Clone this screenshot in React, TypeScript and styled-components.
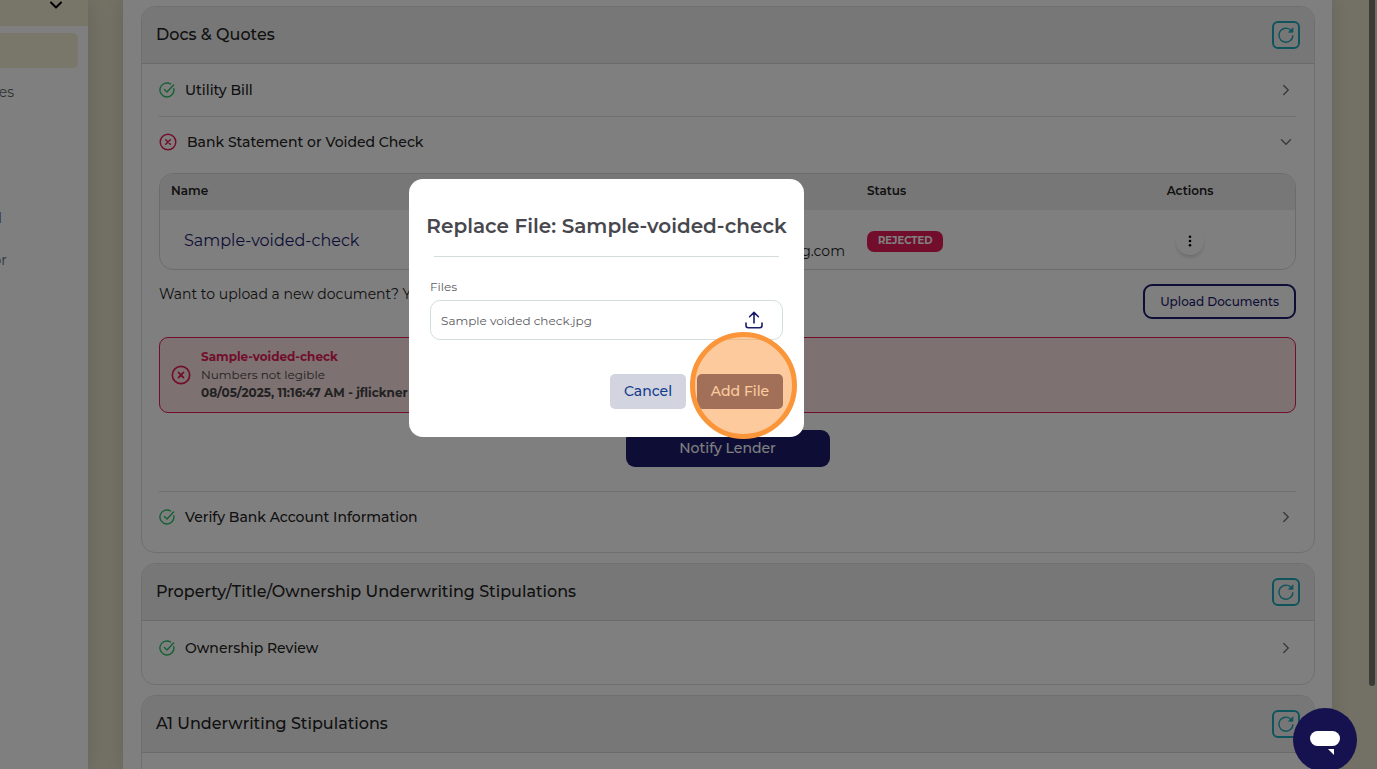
import React from "react";
import styled, { createGlobalStyle } from "styled-components";
import { ChevronDown, ChevronRight } from "lucide-react";

const navy = "#1b1b6b";
const red = "#e41c58";
const teal = "#1fa9b8";

const GlobalStyle = createGlobalStyle`
  *, *::before, *::after { box-sizing: border-box; }
  html, body { margin: 0; height: 100%; overflow: hidden; }
  body, button, input {
    font-family: Montserrat, Inter, "Liberation Sans", sans-serif;
  }
  body { font-size: 14px; line-height: 20px; color: #222222; }
  h2, p { margin: 0; }
  button { cursor: pointer; }
`;

const Page = styled.div`
  display: flex;
  height: 100vh;
  overflow: hidden;
  background: #e7e3ca;
`;

const Sidebar = styled.nav`
  flex: 0 0 88px;
  background: #ffffff;
  box-shadow: 0 0 20px rgba(0, 0, 0, 0.12);
`;

const SidebarTop = styled.button`
  display: flex;
  align-items: flex-start;
  justify-content: flex-end;
  width: 100%;
  height: 26px;
  padding: 0 24px 0 0;
  border: 0;
  background: #f0ecd2;
  color: #000000;
`;

const NavItem = styled.a<{ $active?: boolean; $width?: number }>`
  display: flex;
  justify-content: flex-end;
  align-items: center;
  height: 35px;
  margin: 0 0 7px;
  padding-bottom: 1px;
  width: ${(p) => p.$width ?? 78}px;
  overflow: hidden;
  border-radius: 0 5px 5px 0;
  background: ${(p) => (p.$active ? "#f3efd4" : "transparent")};
  color: #666666;
  text-decoration: none;
`;

const NavList = styled.div`
  padding-top: 7px;
`;

const Main = styled.main`
  flex: 1;
  min-width: 0;
  display: flex;
  flex-direction: column;
  gap: 10px;
  margin: 0 45px 0 35px;
  padding: 6px 17px 0 18px;
  background: #ffffff;
  box-shadow: 0 0 20px rgba(0, 0, 0, 0.12);
`;

const Card = styled.section`
  flex: none;
  border: 1px solid #dfdfdf;
  border-radius: 14px;
  overflow: hidden;
`;

const CardHeader = styled.header`
  display: flex;
  align-items: center;
  justify-content: space-between;
  height: 57px;
  padding: 0 14px;
  background: #eeeeee;
  border-bottom: 1px solid #d4d4d4;
`;

const CardTitle = styled.h2`
  font-size: 16px;
  line-height: 24px;
  font-weight: 500;
`;

const RefreshButton = styled.button`
  display: grid;
  place-items: center;
  width: 28px;
  height: 28px;
  padding: 0;
  border: 2px solid ${teal};
  border-radius: 6px;
  background: transparent;
`;

const CardBody = styled.div`
  padding: 0 18px 10px 17px;
`;

const Row = styled.button<{ $first?: boolean; $line?: boolean }>`
  display: flex;
  align-items: center;
  gap: 10px;
  width: 100%;
  height: ${(p) => (p.$first ? 53 : 50)}px;
  padding: 0 1px 0 0;
  border: 0;
  border-bottom: ${(p) => (p.$line ? "1px solid #e0e0e0" : "0")};
  background: transparent;
  color: #222222;
  font-size: 14px;
  line-height: 20px;
  font-weight: 500;
  text-align: left;

  svg:last-child { margin-left: auto; }
`;

const TableFrame = styled.div`
  margin-top: 6px;
  border: 1px solid #d9d9d9;
  border-radius: 14px;
  overflow: hidden;
`;

const Table = styled.table`
  width: 100%;
  table-layout: fixed;
  border-collapse: collapse;
`;

const HeadCell = styled.th<{ $width?: string; $center?: boolean }>`
  width: ${(p) => p.$width ?? "auto"};
  height: 36px;
  padding: 0 11px 2px;
  background: #eeeeee;
  font-size: 12px;
  font-weight: 600;
  text-align: ${(p) => (p.$center ? "center" : "left")};
`;

const Cell = styled.td<{ $align?: string }>`
  height: 59px;
  padding: 2px 11px 0;
  text-align: ${(p) => p.$align ?? "left"};
`;

const FileLink = styled.a`
  padding-left: 13px;
  color: ${navy};
  font-size: 16px;
  text-decoration: none;
`;

const Email = styled.span`
  display: block;
  padding-top: 20px;
`;

const Badge = styled.span`
  display: inline-block;
  padding: 0 11px 1px;
  border-radius: 7px;
  background: ${red};
  color: #ffffff;
  font-size: 10px;
  line-height: 20px;
  font-weight: 700;
`;

const MoreButton = styled.button`
  display: inline-grid;
  place-items: center;
  width: 28px;
  height: 28px;
  padding: 0;
  border: 0;
  border-radius: 50%;
  background: #ffffff;
  color: #000000;
  vertical-align: middle;
  box-shadow: 0 3px 4px -1px rgba(0, 0, 0, 0.18);
`;

const UploadRow = styled.div`
  display: flex;
  justify-content: space-between;
  margin-top: 14px;
`;

const OutlineButton = styled.button`
  height: 35px;
  padding: 0 15px;
  border: 2px solid ${navy};
  border-radius: 9px;
  background: transparent;
  color: ${navy};
  font-size: 12px;
  font-weight: 500;
`;

const Alert = styled.div`
  display: flex;
  align-items: center;
  gap: 10px;
  height: 76px;
  margin-top: 18px;
  padding: 0 11px;
  border: 1px solid ${red};
  border-radius: 9px;
  background: #fbe2e2;
  font-size: 12px;
  line-height: 18px;
  color: #444444;
`;

const AlertTitle = styled.strong`
  display: block;
  font-weight: 700;
  color: ${red};
`;

const AlertMeta = styled.strong`
  display: block;
  font-weight: 700;
`;

const NotifyRow = styled.div`
  display: flex;
  justify-content: center;
  padding: 17px 0 24px;
  border-bottom: 1px solid #e0e0e0;
`;

const NotifyButton = styled.button`
  width: 204px;
  height: 37px;
  padding: 0 0 2px;
  border: 0;
  border-radius: 9px;
  background: ${navy};
  color: #ffffff;
  font-size: 14px;
  font-weight: 500;
`;

const ScrollThumb = styled.div`
  position: fixed;
  top: -6px;
  right: 2px;
  width: 6px;
  height: 90vh;
  border-radius: 3px;
  background: #77766b;
`;

const Overlay = styled.div`
  position: fixed;
  inset: 0;
  display: flex;
  align-items: center;
  justify-content: center;
  padding: 0 164px 153px 0;
  background: rgba(0, 0, 0, 0.5);
`;

const Dialog = styled.form`
  width: 395px;
  padding: 32px 21px 28px;
  border-radius: 14px;
  background: #ffffff;
`;

const DialogTitle = styled.h2`
  margin: 0 -20px;
  color: #47474d;
  font-size: 20px;
  line-height: 30px;
  font-weight: 600;
  text-align: center;
  white-space: nowrap;
`;

const Rule = styled.hr`
  height: 1px;
  margin: 15px 4px 20px;
  border: 0;
  background: #d5dcdc;
`;

const Label = styled.label`
  display: block;
  color: #5a5a60;
  font-size: 12px;
  line-height: 20px;
`;

const FileField = styled.div`
  display: flex;
  align-items: center;
  height: 40px;
  margin-top: 3px;
  padding: 0 19px 0 10px;
  border: 1px solid #d3dede;
  border-radius: 10px;
`;

const FileInput = styled.input`
  flex: 1;
  min-width: 0;
  padding: 0;
  border: 0;
  outline: 0;
  background: transparent;
  color: #5a5a60;
  font-size: 12px;
`;

const IconButton = styled.button`
  display: grid;
  padding: 0;
  border: 0;
  background: transparent;
  color: ${navy};
`;

const Actions = styled.div`
  display: flex;
  justify-content: flex-end;
  gap: 11px;
  margin-top: 34px;
`;

const ActionButton = styled.button<{ $primary?: boolean }>`
  width: ${(p) => (p.$primary ? 86 : 76)}px;
  height: 35px;
  padding: 0 0 2px;
  border: 0;
  border-radius: 5px;
  background: ${(p) => (p.$primary ? "#4a4b78" : "#d2d4e0")};
  color: ${(p) => (p.$primary ? "#ffffff" : "#123c8c")};
  font-size: 14px;
  font-weight: 500;
`;

const Highlighted = styled.div`
  position: relative;
  display: flex;
`;

const ClickMarker = styled.span`
  position: absolute;
  left: -7px;
  top: -42px;
  width: 107px;
  height: 107px;
  border: 5px solid #fa953a;
  border-radius: 50%;
  background: rgba(250, 149, 58, 0.5);
  pointer-events: none;
`;

const ChatButton = styled.button`
  position: fixed;
  right: 20px;
  bottom: -3px;
  display: grid;
  place-items: center;
  width: 64px;
  height: 64px;
  padding: 6px 0 0;
  border: 0;
  border-radius: 50%;
  background: #15124f;
`;

const CheckIcon = () => (
  <svg width="16" height="16" viewBox="0 0 16 16" fill="none" stroke="#2cbf68" strokeWidth="1.4" strokeLinecap="round" strokeLinejoin="round" aria-hidden="true">
    <path d="M14.8 6.6A7 7 0 1 1 11.6 2" />
    <path d="M5.4 7.6L8 10L14.6 3" />
  </svg>
);

const CrossIcon = ({ size = 18 }: { size?: number }) => (
  <svg width={size} height={size} viewBox="0 0 18 18" fill="none" stroke={red} strokeWidth="1.5" strokeLinecap="round" aria-hidden="true">
    <circle cx="9" cy="9" r="7.8" />
    <path d="M6.7 6.7L11.3 11.3M11.3 6.7L6.7 11.3" />
  </svg>
);

const RefreshIcon = () => (
  <svg width="18" height="18" viewBox="0 0 18 18" fill="none" stroke={teal} strokeWidth="1.4" strokeLinecap="round" strokeLinejoin="round" aria-hidden="true">
    <path d="M15.9 9.6A7 7 0 1 1 14.3 4.7" />
    <path d="M15.9 2.2V6.2H11.9Z" fill={teal} strokeWidth="0.9" />
  </svg>
);

const DotsIcon = () => (
  <svg width="4" height="12" viewBox="0 0 4 12" fill="currentColor" aria-hidden="true">
    <circle cx="2" cy="1.8" r="1.3" />
    <circle cx="2" cy="6" r="1.3" />
    <circle cx="2" cy="10.2" r="1.3" />
  </svg>
);

const UploadIcon = () => (
  <svg width="18" height="18" viewBox="0 0 18 18" fill="none" stroke="currentColor" strokeWidth="1.6" strokeLinecap="round" strokeLinejoin="round" aria-hidden="true">
    <path d="M9 12V1.6M4.6 5.8L9 1.4L13.4 5.8" />
    <path d="M1 12V14.6Q1 16.8 3.2 16.8H14.8Q17 16.8 17 14.6V12" />
  </svg>
);

const ChatIcon = () => (
  <svg width="30" height="26" viewBox="0 0 30 26" fill="#ffffff" aria-hidden="true">
    <rect x="0" y="1" width="30" height="15" rx="7.5" />
    <path d="M18 19H24V25Z" />
  </svg>
);

function Header({ title }: { title: string }) {
  return (
    <CardHeader>
      <CardTitle>{title}</CardTitle>
      <RefreshButton type="button" aria-label={`Refresh ${title}`}>
        <RefreshIcon />
      </RefreshButton>
    </CardHeader>
  );
}

function CheckedRow({ label, first, line }: { label: string; first?: boolean; line?: boolean }) {
  return (
    <Row type="button" $first={first} $line={line}>
      <CheckIcon />
      {label}
      <ChevronRight size={18} color="#777777" />
    </Row>
  );
}

export default function App() {
  return (
    <>
      <GlobalStyle />
      <Page>
        <Sidebar>
          <SidebarTop type="button" aria-label="Expand">
            <svg width="16" height="12" viewBox="0 0 16 12" fill="none" stroke="currentColor" strokeWidth="2" strokeLinecap="round" strokeLinejoin="round" aria-hidden="true">
              <path d="M3 2.5L8 7.5L13 2.5" />
            </svg>
          </SidebarTop>
          <NavList>
            <NavItem href="#" $active aria-label="Current page" />
            <NavItem href="#" $width={14}>es</NavItem>
            <NavItem href="#" aria-label="Menu item" />
            <NavItem href="#" aria-label="Menu item" />
            <NavItem href="#" $width={2}>d</NavItem>
            <NavItem href="#" $width={7}>or</NavItem>
          </NavList>
        </Sidebar>

        <Main>
          <Card>
            <Header title="Docs & Quotes" />
            <CardBody>
              <CheckedRow label="Utility Bill" first line />
              <Row type="button">
                <CrossIcon />
                Bank Statement or Voided Check
                <ChevronDown size={18} color="#777777" />
              </Row>
              <TableFrame>
                <Table>
                  <thead>
                    <tr>
                      <HeadCell $width="35%">Name</HeadCell>
                      <HeadCell />
                      <HeadCell $width="229px">Status</HeadCell>
                      <HeadCell $width="210px" $center>Actions</HeadCell>
                    </tr>
                  </thead>
                  <tbody>
                    <tr>
                      <Cell><FileLink href="#">Sample-voided-check</FileLink></Cell>
                      <Cell $align="right"><Email>g.com</Email></Cell>
                      <Cell><Badge>REJECTED</Badge></Cell>
                      <Cell $align="center">
                        <MoreButton type="button" aria-label="More actions">
                          <DotsIcon />
                        </MoreButton>
                      </Cell>
                    </tr>
                  </tbody>
                </Table>
              </TableFrame>
              <UploadRow>
                <p>Want to upload a new document? Y</p>
                <OutlineButton type="button">Upload Documents</OutlineButton>
              </UploadRow>
              <Alert>
                <CrossIcon size={20} />
                <div>
                  <AlertTitle>Sample-voided-check</AlertTitle>
                  Numbers not legible
                  <AlertMeta>08/05/2025, 11:16:47 AM - jflickner</AlertMeta>
                </div>
              </Alert>
              <NotifyRow>
                <NotifyButton type="button">Notify Lender</NotifyButton>
              </NotifyRow>
              <CheckedRow label="Verify Bank Account Information" />
            </CardBody>
          </Card>

          <Card>
            <Header title="Property/Title/Ownership Underwriting Stipulations" />
            <CardBody>
              <CheckedRow label="Ownership Review" first />
            </CardBody>
          </Card>

          <Card>
            <Header title="A1 Underwriting Stipulations" />
            <CardBody>
              <Row type="button" $first aria-label="Stipulation" />
            </CardBody>
          </Card>
        </Main>
        <ScrollThumb />
      </Page>

      <Overlay>
        <Dialog role="dialog" aria-labelledby="dialog-title" onSubmit={(e) => e.preventDefault()}>
          <DialogTitle id="dialog-title">Replace File: Sample-voided-check</DialogTitle>
          <Rule />
          <Label htmlFor="file-name">Files</Label>
          <FileField>
            <FileInput id="file-name" type="text" readOnly value="Sample voided check.jpg" />
            <IconButton type="button" aria-label="Choose file">
              <UploadIcon />
            </IconButton>
          </FileField>
          <Actions>
            <ActionButton type="button">Cancel</ActionButton>
            <Highlighted>
              <ActionButton type="submit" $primary>Add File</ActionButton>
              <ClickMarker />
            </Highlighted>
          </Actions>
        </Dialog>
      </Overlay>

      <ChatButton type="button" aria-label="Open chat">
        <ChatIcon />
      </ChatButton>
    </>
  );
}
